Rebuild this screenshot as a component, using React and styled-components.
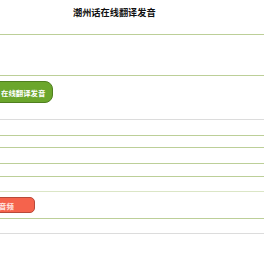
import styled, { createGlobalStyle } from "styled-components";

const GlobalStyle = createGlobalStyle`
  body {
    margin: 0;
    background: #ffffff;
    font-family: "Noto Sans CJK SC", "Noto Sans", sans-serif;
    overflow: hidden;
  }
`;

const colors = {
  green: "#bccf98",
  light: "#dbe6c6",
  gray: "#dcdcdc",
};

const Page = styled.div`
  width: 264px;
  overflow: hidden;
`;

const Header = styled.div`
  height: 35px;
  box-sizing: border-box;
  padding: 6px 0 0 73px;
  border-bottom: 1px solid ${colors.green};
`;

const Title = styled.h1`
  margin: 0;
  font-size: 9.2px;
  line-height: 13px;
  font-weight: 700;
  color: #111;
  white-space: nowrap;
`;

const Row = styled.div`
  height: ${(p) => p.h}px;
  box-sizing: content-box;
  border-bottom: 1px solid ${(p) => colors[p.line]};
  display: flex;
  align-items: flex-start;
  padding-top: ${(p) => p.pt || 0}px;
`;

const GreenButton = styled.button`
  margin-left: -8px;
  height: 22px;
  width: 61px;
  box-sizing: border-box;
  padding: 0 0 0 8px;
  border: 1px solid #4f7f1f;
  border-radius: 8px;
  background: #6ba62c;
  color: #ffffff;
  font-family: inherit;
  font-size: 7.4px;
  font-weight: 700;
  text-align: left;
  white-space: nowrap;
`;

const RedButton = styled.button`
  margin-left: -10px;
  height: 16px;
  width: 45px;
  box-sizing: border-box;
  padding: 0 0 0 8px;
  border: 1px solid #b8493a;
  border-radius: 5px;
  background: #f5634c;
  color: #ffe9e4;
  font-family: inherit;
  font-size: 7.4px;
  font-weight: 700;
  text-align: left;
  white-space: nowrap;
`;

export default function App() {
  return (
    <Page>
      <GlobalStyle />
      <Header>
        <Title>潮州话在线翻译发音</Title>
      </Header>
      <Row h={40} line="green" />
      <Row h={38} pt={5} line="gray">
        <GreenButton>在线翻译发音</GreenButton>
      </Row>
      <Row h={15} line="green" />
      <Row h={11} line="green" />
      <Row h={15} line="green" />
      <Row h={12} line="green" />
      <Row h={14} line="light" />
      <Row h={21} pt={5} line="green">
        <RedButton>音频</RedButton>
      </Row>
      <Row h={14} line="gray" />
    </Page>
  );
}
